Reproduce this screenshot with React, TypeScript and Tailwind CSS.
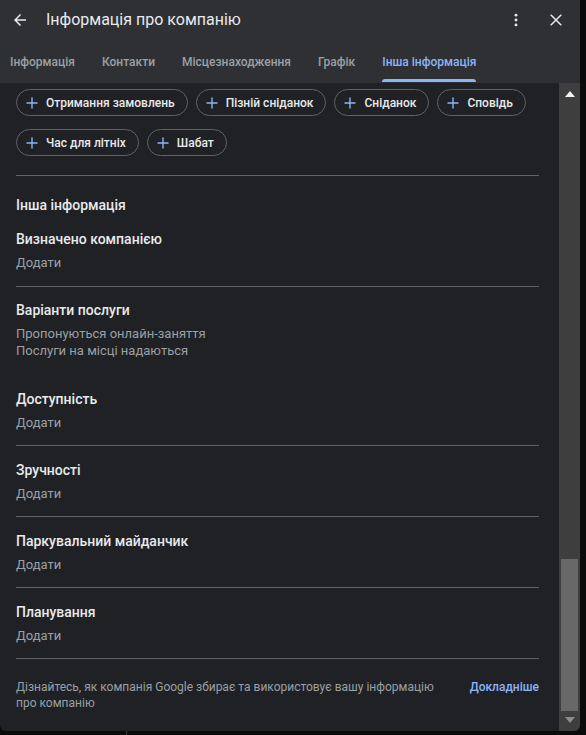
import React from 'react';

const CHIPS: string[][] = [
  ['Отримання замовлень', 'Пізній сніданок', 'Сніданок', 'Сповідь'],
  ['Час для літніх', 'Шабат'],
];

const TABS = ['Інформація', 'Контакти', 'Місцезнаходження', 'Графік', 'Інша інформація'];

interface Section {
  title: string;
  lines: string[];
  divider: boolean;
}

const SECTIONS: Section[] = [
  { title: 'Варіанти послуги', lines: ['Пропонуються онлайн-заняття', 'Послуги на місці надаються'], divider: false },
  { title: 'Доступність', lines: ['Додати'], divider: true },
  { title: 'Зручності', lines: ['Додати'], divider: true },
  { title: 'Паркувальний майданчик', lines: ['Додати'], divider: true },
  { title: 'Планування', lines: ['Додати'], divider: true },
];

const Plus = () => (
  <svg width="12" height="12" viewBox="0 0 12 12" aria-hidden>
    <path d="M6 0.5v11M0.5 6h11" stroke="#8ab4f8" strokeWidth="1.4" fill="none" />
  </svg>
);

const App: React.FC = () => {
  return (
    <div className="w-[586px] h-[735px] bg-[#0b0b0c] relative overflow-hidden font-['Roboto',sans-serif]">
      <div className="absolute left-[126px] top-[731px] h-[4px] w-px bg-[#3a3a3a]" />
      <div className="w-[580px] h-[731px] flex flex-col rounded-b-[6px] overflow-hidden bg-[#202124]">
        {/* header */}
        <header className="bg-[#2f3033] h-[83px] shrink-0 flex flex-col">
          <div className="h-[40px] flex items-center pl-[11px] pr-[15px]">
            <svg width="18" height="18" viewBox="0 0 24 24" aria-hidden>
              <path d="M20 11H7.83l5.59-5.59L12 4l-8 8 8 8 1.41-1.41L7.83 13H20v-2z" fill="#e8eaed" />
            </svg>
            <h1 className="ml-[17px] text-[16px] text-[#e8eaed] leading-5">Інформація про компанію</h1>
            <div className="ml-auto flex items-center gap-[22px]">
              <svg width="18" height="18" viewBox="0 0 24 24" aria-hidden>
                <circle cx="12" cy="5.5" r="1.9" fill="#e8eaed" />
                <circle cx="12" cy="12" r="1.9" fill="#e8eaed" />
                <circle cx="12" cy="18.5" r="1.9" fill="#e8eaed" />
              </svg>
              <svg width="18" height="18" viewBox="0 0 24 24" aria-hidden>
                <path d="M5 5l14 14M19 5L5 19" stroke="#e8eaed" strokeWidth="2" fill="none" />
              </svg>
            </div>
          </div>
          <nav className="flex-1 flex pl-[10px] gap-[27px]">
            {TABS.map((tab, i) => {
              const active = i === TABS.length - 1;
              return (
                <div key={tab} className="relative flex items-center">
                  <span
                    className={
                      active
                        ? 'text-[12px] font-medium text-[#8ab4f8]'
                        : 'text-[12px] font-medium text-[#9aa0a6]'
                    }
                  >
                    {tab}
                  </span>
                  {active && (
                    <div className="absolute left-0 right-0 bottom-[1px] h-[3px] rounded-t-[3px] bg-[#8ab4f8]" />
                  )}
                </div>
              );
            })}
          </nav>
        </header>

        <div className="flex-1 flex min-h-0">
          {/* content */}
          <main className="flex-1 pl-4 pr-5 pt-[6px]">
            <div className="flex flex-col gap-[13px]">
              {CHIPS.map((row, r) => (
                <div key={r} className="flex gap-2">
                  {row.map((chip) => (
                    <div
                      key={chip}
                      className="h-[27px] flex items-center gap-[8px] pl-[9px] pr-[12px] rounded-full border border-[#5f6368]"
                    >
                      <Plus />
                      <span className="text-[12px] font-medium text-[#e8eaed]">{chip}</span>
                    </div>
                  ))}
                </div>
              ))}
            </div>

            <div className="mt-[19px] border-t border-[#5f6368]" />

            <h2 className="mt-[19px] text-[14px] leading-5 font-medium text-[#e8eaed]">Інша інформація</h2>

            <div className="pt-[14px] pb-[14px] border-b border-[#5f6368]">
              <div className="text-[14px] leading-5 font-medium text-[#e8eaed]">Визначено компанією</div>
              <div className="mt-[5px] text-[13px] leading-[18px] text-[#9aa0a6]">Додати</div>
            </div>

            {SECTIONS.map((s, i) => (
              <div
                key={s.title}
                className={
                  s.divider
                    ? 'pb-[14px] border-b border-[#5f6368] ' + (i === 1 ? 'pt-[30px]' : 'pt-[14px]')
                    : 'pt-[13px]'
                }
              >
                <div className="text-[14px] leading-5 font-medium text-[#e8eaed]">{s.title}</div>
                <div className="mt-[5px] text-[13px] leading-[17px] text-[#9aa0a6]">
                  {s.lines.map((l) => (
                    <div key={l}>{l}</div>
                  ))}
                </div>
              </div>
            ))}

            <div className="mt-[20px] flex items-start gap-4">
              <p className="flex-1 text-[12px] leading-4 text-[#9aa0a6]">
                Дізнайтесь, як компанія Google збирає та використовує вашу інформацію про компанію
              </p>
              <a className="text-[12px] leading-4 font-medium text-[#8ab4f8]">Докладніше</a>
            </div>
          </main>

          {/* scrollbar */}
          <div className="w-[21px] shrink-0 bg-[#3e3e3e] flex flex-col items-center">
            <svg width="10" height="6" viewBox="0 0 10 6" className="mt-[8px]" aria-hidden>
              <path d="M5 0L10 6H0z" fill="#f1f1f1" />
            </svg>
            <div className="mt-auto w-[17px] h-[152px] bg-[#686868]" />
            <svg width="10" height="6" viewBox="0 0 10 6" className="mt-[6px] mb-[8px]" aria-hidden>
              <path d="M0 0h10L5 6z" fill="#8d8d8d" />
            </svg>
          </div>
        </div>
      </div>
    </div>
  );
};

export default App;
